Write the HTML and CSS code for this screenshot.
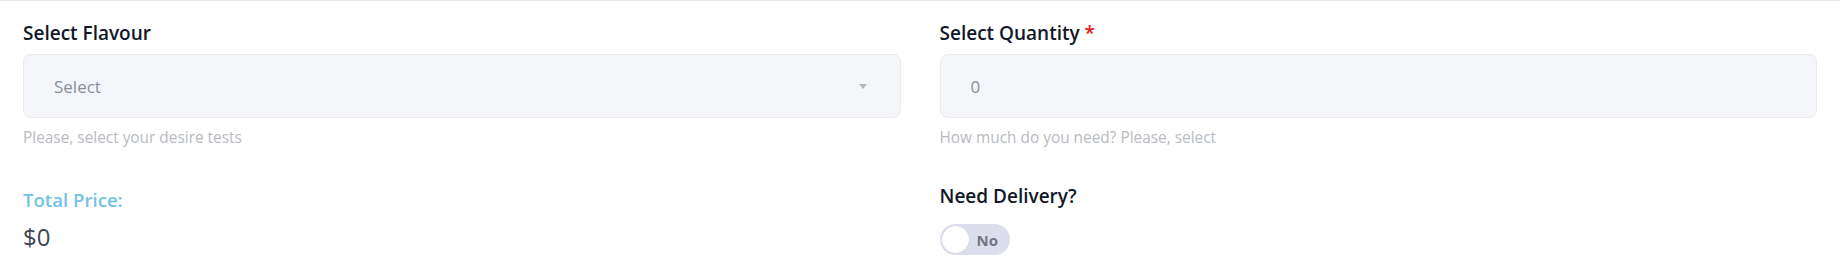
FILE: index.html
```html
<!DOCTYPE html>
<html lang="en">
<head>
<meta charset="utf-8">
<title>Order form</title>
<link rel="stylesheet" href="styles.css">
</head>
<body>
<form class="order-form">
  <div class="field">
    <label class="field-label">Select Flavour</label>
    <div class="input select-input">
      <span class="placeholder">Select</span>
      <span class="caret"></span>
    </div>
    <p class="helper">Please, select your desire tests</p>
  </div>
  <div class="field">
    <label class="field-label">Select Quantity <span class="required">*</span></label>
    <div class="input">
      <span class="placeholder">0</span>
    </div>
    <p class="helper">How much do you need? Please, select</p>
  </div>
  <div class="total">
    <div class="total-label">Total Price:</div>
    <div class="total-value">$0</div>
  </div>
  <div class="delivery">
    <div class="field-label">Need Delivery?</div>
    <div class="toggle">
      <span class="knob"></span>
      <span class="toggle-text">No</span>
    </div>
  </div>
</form>
</body>
</html>
```

FILE: styles.css
```css
html, body {
  margin: 0;
  padding: 0;
  background: #ffffff;
}

body {
  font-family: "Open Sans", "Noto Sans", sans-serif;
}

.order-form {
  border-top: 1px solid #e6e7ea;
  padding: 20px 23px 0;
  display: grid;
  grid-template-columns: 1fr 1fr;
  column-gap: 39px;
  align-items: start;
}

.field {
  display: flex;
  flex-direction: column;
}

.field-label {
  display: block;
  font-size: 19px;
  line-height: 24px;
  font-weight: 600;
  color: #111827;
}

.required {
  color: #f01616;
}

.input {
  margin-top: 9px;
  height: 64px;
  box-sizing: border-box;
  border: 1px solid #e9ebf0;
  border-radius: 8px;
  background: #f5f6fa;
  display: flex;
  align-items: center;
  justify-content: space-between;
  padding: 0 30px;
}

.placeholder {
  font-size: 17px;
  color: #8a8e97;
}

.caret {
  width: 0;
  height: 0;
  border-left: 4px solid transparent;
  border-right: 4px solid transparent;
  border-top: 5px solid #b5b6b9;
  margin-right: 3px;
}

.helper {
  margin: 10px 0 0;
  font-size: 15.4px;
  line-height: 20px;
  color: #b8bbc2;
}

.total {
  margin-top: 40px;
}

.total-label {
  font-size: 18.6px;
  line-height: 24px;
  font-weight: 600;
  color: #72c3e6;
}

.total-value {
  margin-top: 10px;
  font-size: 24px;
  line-height: 30px;
  color: #3f4652;
}

.delivery {
  margin-top: 36px;
}

.toggle {
  margin-top: 16px;
  width: 70px;
  height: 31px;
  border-radius: 16px;
  background: #dcdfeb;
  display: flex;
  align-items: center;
  box-sizing: border-box;
  padding: 0 2px;
}

.knob {
  width: 27px;
  height: 27px;
  border-radius: 50%;
  background: #ffffff;
  box-shadow: 0 0 1px rgba(0, 0, 0, 0.15);
}

.toggle-text {
  margin-left: 8px;
  font-size: 15px;
  font-weight: 700;
  color: #707584;
}
```
